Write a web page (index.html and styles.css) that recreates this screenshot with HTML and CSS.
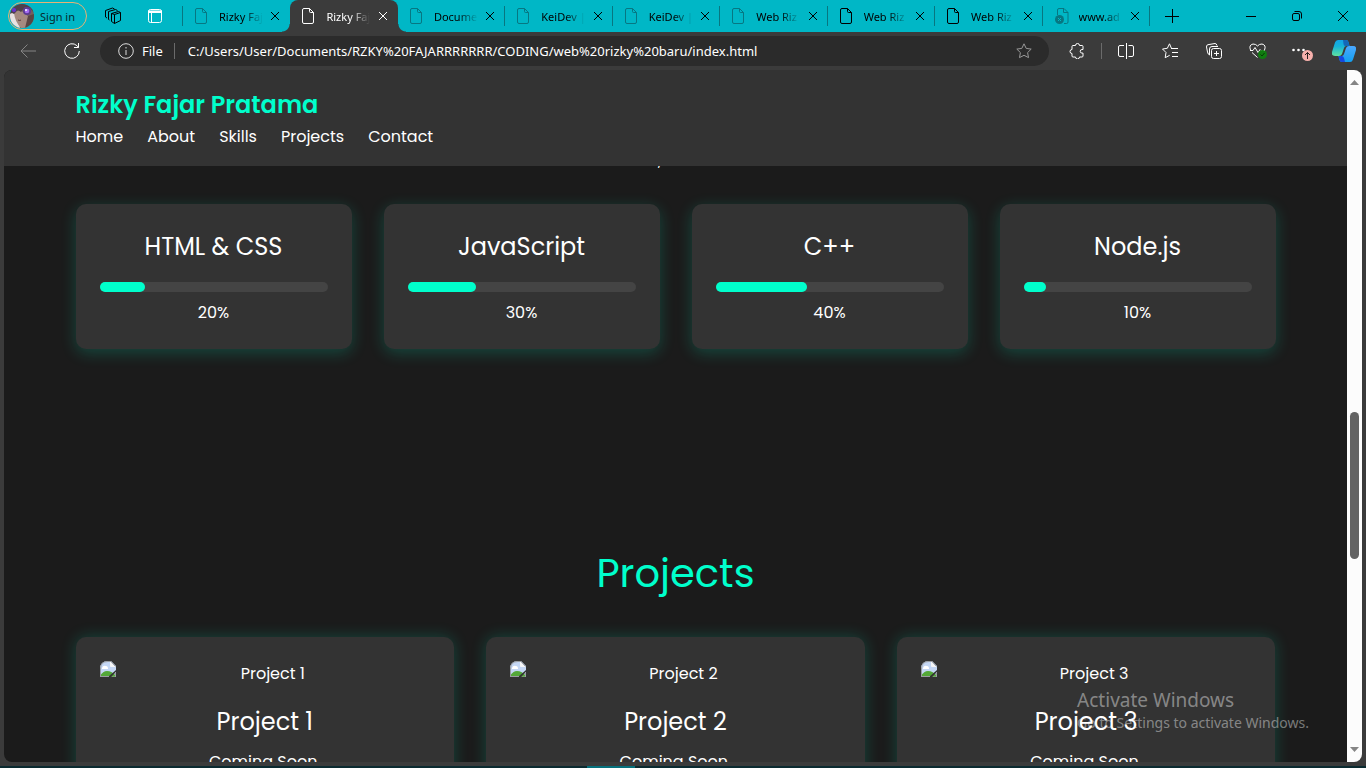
FILE: index.html
```html
<!DOCTYPE html>
<html lang="en">
<head>
<meta charset="utf-8">
<title>Rizky Fajar Pratama</title>
<link rel="stylesheet" href="styles.css">
</head>
<body>
<svg class="defs" width="0" height="0" aria-hidden="true">
  <symbol id="file" viewBox="0 0 12 16"><path d="M7.500.5H2A1.500 1.500 0 0 0 .5 2v12A1.500 1.500 0 0 0 2 15.500h8a1.500 1.500 0 0 0 1.500-1.500V4.500zM7.500.5v3a1 1 0 0 0 1 1h3"/></symbol>
  <symbol id="x" viewBox="0 0 10 10"><path d="M1 1l8 8M9 1L1 9"/></symbol>
  <symbol id="broken" viewBox="0 0 16 16">
    <path d="M0 16V8Q0 0 8 0h3l5 5v11z" fill="#c4d7f5"/>
    <path d="M10 0l6 6h-5q-1 0-1-1z" fill="#f5f6f8"/>
    <path d="M2 7q1-3 4-2 2 0 2 3H2z" fill="#fff"/>
    <path d="M0 15q3-5 7-5 5 0 9 5v1H0z" fill="#54a838"/>
    <path d="M8 16l8-7v2l-5 5z" fill="#333"/>
    <path d="M.5 16V8Q.5.500 8 .500h3l4.500 5M0 15.500h9M15.500 11v5H12" fill="none" stroke="#9a9da1"/>
  </symbol>
</svg>

<header class="tabstrip">
  <div class="tabstrip-start">
    <button class="profile">
      <svg class="avatar" viewBox="0 0 24 24" aria-hidden="true">
        <defs><clipPath id="round"><circle cx="12" cy="12" r="12"/></clipPath></defs>
        <g clip-path="url(#round)">
          <rect width="24" height="24" fill="#75605d"/>
          <path d="M0 9l7-2 3 17H0z" fill="#e8e2e2"/>
          <path d="M4 9q4-4 9-1l7 6-3 10h-6q-6-6-7-15z" fill="#a58a80"/>
          <path d="M0 0h24v9l-4-5-5-1-4 5-3-2-4 4-2-1-2 1z" fill="#4f414b"/>
          <path d="M18 12l6-2v14h-9z" fill="#5a4644"/>
          <path d="M8 16q2 1 3 0" stroke="#5a3c3a" fill="none"/>
          <circle cx="17" cy="7" r="4" fill="#5c3a93"/><circle cx="17" cy="7" r="2.300" fill="#a56cf0"/><circle cx="16" cy="6" r="1" fill="#fff"/>
          <circle cx="4" cy="6" r="2" fill="#6931d4"/>
        </g>
      </svg>
      Sign in
    </button>
    <button class="strip-btn" aria-label="Workspaces">
      <svg class="line" width="18" height="18" viewBox="0 0 18 18"><path d="M7.500 6.500l7-2 2 1v8l-6 3-3-2zM10.500 7.500l6-2M10.500 7.500v9M7.500 6.500l3 1M5.500 13l-1-.5v-8l7-2 2 1M3 11l-1.500-1V3.500l7-2.500 2 1"/></svg>
    </button>
    <button class="strip-btn" aria-label="Tab actions">
      <svg width="16" height="16" viewBox="0 0 16 16"><rect x="1.500" y="1.500" width="13" height="13" rx="2" fill="none" stroke="#fff"/><path d="M1 2.500h14V5H1zM4 5h1v9H4z" fill="#fff"/></svg>
    </button>
  </div>
  <nav class="tabs" aria-label="Tabs">
    <div class="tab dim"><svg class="file"><use href="#file"/></svg><span class="tab-title">Rizky Faj</span><button class="close" aria-label="Close tab"><svg><use href="#x"/></svg></button></div>
    <div class="tab active"><svg class="file"><use href="#file"/></svg><span class="tab-title">Rizky Faj</span><button class="close" aria-label="Close tab"><svg><use href="#x"/></svg></button></div>
    <div class="tab dim"><svg class="file"><use href="#file"/></svg><span class="tab-title">Docume</span><button class="close" aria-label="Close tab"><svg><use href="#x"/></svg></button></div>
    <div class="tab dim"><svg class="file"><use href="#file"/></svg><span class="tab-title">KeiDev |</span><button class="close" aria-label="Close tab"><svg><use href="#x"/></svg></button></div>
    <div class="tab dim"><svg class="file"><use href="#file"/></svg><span class="tab-title">KeiDev |</span><button class="close" aria-label="Close tab"><svg><use href="#x"/></svg></button></div>
    <div class="tab dim"><svg class="file"><use href="#file"/></svg><span class="tab-title">Web Riz</span><button class="close" aria-label="Close tab"><svg><use href="#x"/></svg></button></div>
    <div class="tab"><svg class="file"><use href="#file"/></svg><span class="tab-title">Web Riz</span><button class="close" aria-label="Close tab"><svg><use href="#x"/></svg></button></div>
    <div class="tab"><svg class="file"><use href="#file"/></svg><span class="tab-title">Web Riz</span><button class="close" aria-label="Close tab"><svg><use href="#x"/></svg></button></div>
    <div class="tab dim"><svg class="file file-error" viewBox="0 0 14 16"><path d="M2.500 7V2q0-1.500 1.500-1.500h5l4 4V14q0 1.500-1.500 1.500H9M8.500.5v4h4.500"/><circle cx="4.500" cy="11.500" r="4.500" fill="#077782" stroke="none"/><path d="M3 10l3 3M6 10l-3 3" class="err-x"/></svg><span class="tab-title">www.ad</span><button class="close" aria-label="Close tab"><svg><use href="#x"/></svg></button></div>
  </nav>
  <div class="tabstrip-end">
    <button class="new-tab" aria-label="New tab"><svg class="line" width="14" height="14" viewBox="0 0 14 14"><path d="M7.500 0v14M0 7.500h14"/></svg></button>
    <div class="window-controls">
      <button aria-label="Minimize"><svg class="line" width="10" height="10" viewBox="0 0 10 10"><path d="M0 5.500h10"/></svg></button>
      <button aria-label="Restore"><svg class="line" width="10" height="10" viewBox="0 0 10 10"><rect x=".5" y="2.500" width="7" height="7" rx="1.500"/><path d="M2.500.5H7q2.500 0 2.500 2.500v4.500"/></svg></button>
      <button aria-label="Close"><svg class="line" width="10" height="10" viewBox="0 0 10 10"><path d="M0 0l10 10M10 0L0 10"/></svg></button>
    </div>
  </div>
</header>

<div class="toolbar">
  <div class="nav-buttons">
    <button class="faded" aria-label="Back"><svg class="line" width="16" height="14" viewBox="0 0 16 14"><path d="M16 7H1M7.500.5L1 7l6.500 6.500"/></svg></button>
    <button aria-label="Refresh"><svg class="line" width="16" height="16" viewBox="0 0 16 16"><path d="M15.300 8A7.300 7.300 0 1 1 13 2.700l1.500 1.800M14.500 0v4.500H10"/></svg></button>
  </div>
  <div class="address">
    <svg class="line info" width="16" height="16" viewBox="0 0 16 16"><circle cx="8" cy="8" r="7.300"/><path d="M8 7v5M8 4v1.500"/></svg>
    <label for="url">File</label>
    <span class="divider"></span>
    <input id="url" type="text" value="C:/Users/User/Documents/RZKY%20FAJARRRRRRR/CODING/web%20rizky%20baru/index.html" spellcheck="false">
    <button class="fav" aria-label="Favorite"><svg class="line" width="16" height="16" viewBox="0 0 16 16"><path d="M8 .8l2.200 4.600 5 .7-3.600 3.500.9 5L8 12.300l-4.500 2.300.9-5L.8 6.100l5-.7z"/></svg></button>
  </div>
  <div class="tools">
    <button aria-label="Extensions"><svg class="line" width="16" height="16" viewBox="0 0 16 16"><path d="M4 2.500h2.500a2 2 0 0 1 4 0H13q1 0 1 1V6.500h-1a1.800 1.800 0 0 0 0 3.600h1V13q0 1-1 1h-2.500a2 2 0 0 1-4 0H4q-1 0-1-1v-2.500a2 2 0 0 1 0-4V3.500q0-1 1-1z"/></svg></button>
    <span class="divider"></span>
    <button aria-label="Split screen"><svg class="line" width="16" height="16" viewBox="0 0 16 16"><path d="M6 2.500H2q-1.500 0-1.500 1.500v8q0 1.500 1.500 1.500h4M8.500 0v16M10.500 2.500H14q1.500 0 1.500 1.500v8q0 1.500-1.500 1.500h-3.500"/></svg></button>
    <button aria-label="Favorites"><svg class="line" width="16" height="16" viewBox="0 0 16 16"><path d="M9.500 5.500L7.500.8 5.300 5.300.5 6l3.500 3.500-.8 5.200 4.500-2.400M9 5.500h7M10 9.500h6M10 13.500h6"/></svg></button>
    <button aria-label="Collections"><svg class="line" width="16" height="16" viewBox="0 0 16 16"><rect x="5.500" y="5.500" width="10" height="10" rx="2"/><path d="M10.500 8v5M8 10.500h5M3.500 12Q2 11.500 1.500 9L.5 4Q.3 2 2 1.700L9 .5q1.500 0 2 2M3.500 12V6q0-2.500 2.500-2.500h6"/></svg></button>
    <button aria-label="Browser essentials"><svg class="line" width="18" height="16" viewBox="0 0 18 16"><path d="M1.500 7Q-.5 2 4 1q3 0 4.500 2Q10 1 13 1q4.500 1 2.500 6M1 7.500h3l2-3 3 5 2-3 1 1h4M3 9.500l5.500 5"/><circle cx="13.500" cy="11.500" r="4.500" fill="#107c10" stroke="none"/><path d="M11.500 11.500l1.500 1.500 2.500-3" stroke="#073b07"/></svg></button>
    <button aria-label="Settings and more"><svg width="22" height="22" viewBox="0 0 22 22"><circle cx="2.500" cy="10" r="1.300" fill="#fff"/><circle cx="7.500" cy="10" r="1.300" fill="#fff"/><circle cx="12.500" cy="10" r="1.300" fill="#fff"/><circle cx="16.500" cy="15.500" r="5.500" fill="#f7b0ac"/><path d="M16.500 19v-6.500M14 15l2.500-2.500L19 15" fill="none" stroke="#2a2020"/></svg></button>
    <button class="copilot" aria-label="Copilot"><svg width="24" height="22" viewBox="0 0 24 22">
      <defs>
        <linearGradient id="ca" x1="0" y1="0" x2="0" y2="1"><stop offset="0" stop-color="#12a4e8"/><stop offset=".4" stop-color="#16b3d8"/><stop offset="1" stop-color="#5fe0a0"/></linearGradient>
        <linearGradient id="cb" x1="0" y1="0" x2="0" y2="1"><stop offset="0" stop-color="#4aa8ff"/><stop offset="1" stop-color="#12a0f0"/></linearGradient>
      </defs>
      <path d="M6 0h8q2 0 2.500 2l1 4h-3q-2 0-2.500 2l-2 6q-.8 2-3 2H3q-4 0-3-4L3 2.500Q3.800 0 6 0z" fill="url(#ca)"/>
      <path d="M11 0h3q2 0 2.500 2l1 4h-4q-2 0-2-2z" fill="#1467b8"/>
      <path d="M18 22h-8q-2 0-2.500-2l-1-4h3q2 0 2.500-2l2-6q.8-2 3-2h4q4 0 3 4l-3 9.500q-.8 2.500-3 2.500z" fill="url(#cb)"/>
      <path d="M13 22h-3q-2 0-2.500-2l-1-4h3q2 0 2.500 2z" fill="#1746e0"/>
    </svg></button>
  </div>
</div>

<div class="viewport">
  <div class="page">
    <header class="site-header">
      <div class="container">
        <div class="logo">Rizky Fajar Pratama</div>
        <nav class="menu">
          <a href="#home">Home</a><a href="#about">About</a><a href="#skills">Skills</a><a href="#projects">Projects</a><a href="#contact">Contact</a>
        </nav>
      </div>
    </header>
    <main class="container">
      <section id="skills" class="skills">
        <p class="lead">,</p>
        <div class="skill-grid">
          <article class="card"><h3>HTML &amp; CSS</h3><div class="bar"><div class="fill" style="width:20%"></div></div><p>20%</p></article>
          <article class="card"><h3>JavaScript</h3><div class="bar"><div class="fill" style="width:30%"></div></div><p>30%</p></article>
          <article class="card"><h3>C++</h3><div class="bar"><div class="fill" style="width:40%"></div></div><p>40%</p></article>
          <article class="card"><h3>Node.js</h3><div class="bar"><div class="fill" style="width:10%"></div></div><p>10%</p></article>
        </div>
      </section>
      <section id="projects" class="projects">
        <h2>Projects</h2>
        <div class="project-grid">
          <article class="card"><div class="thumb"><svg><use href="#broken"/></svg><span>Project 1</span></div><h3>Project 1</h3><p>Coming Soon.</p></article>
          <article class="card"><div class="thumb"><svg><use href="#broken"/></svg><span>Project 2</span></div><h3>Project 2</h3><p>Coming Soon.</p></article>
          <article class="card"><div class="thumb"><svg><use href="#broken"/></svg><span>Project 3</span></div><h3>Project 3</h3><p>Coming Soon.</p></article>
        </div>
      </section>
    </main>
  </div>
  <div class="scrollbar" aria-hidden="true">
    <svg width="9" height="5" viewBox="0 0 9 5"><path d="M0 5L4.500 0 9 5z" fill="#858585"/></svg>
    <div class="track"><div class="scroll-thumb"></div></div>
    <svg width="9" height="5" viewBox="0 0 9 5"><path d="M0 0l4.500 5L9 0z" fill="#858585"/></svg>
  </div>
</div>
<footer class="taskbar-edge"><span></span></footer>

<aside class="watermark"><strong>Activate Windows</strong><span>Go to Settings to activate Windows.</span></aside>
</body>
</html>
```
FILE: styles.css
```css
* { box-sizing: border-box; }

body {
  margin: 0;
  height: 100vh;
  display: flex;
  flex-direction: column;
  overflow: hidden;
  background: #3b3b3b;
  color: #fff;
  font-family: "Segoe UI", "Noto Sans", sans-serif;
  font-size: 11px;
}

button {
  display: flex;
  align-items: center;
  justify-content: center;
  padding: 0;
  border: 0;
  background: none;
  color: inherit;
  font: inherit;
}

h2, h3, p { margin: 0; font-weight: 400; }

.defs { position: absolute; }
.line { fill: none; stroke: currentColor; }

/* Tab strip */
.tabstrip {
  display: flex;
  flex: none;
  height: 32px;
  background: #00b7c6;
  color: #06282c;
}

.tabstrip-start {
  display: flex;
  align-items: center;
  flex: none;
  width: 183px;
  padding-left: 8px;
  background: linear-gradient(#087680, #087680) right center / 1px 20px no-repeat;
}

.profile {
  gap: 6px;
  width: 79px;
  height: 28px;
  margin-right: 5px;
  border: 1px solid #e8b274;
  border-radius: 14px;
  justify-content: flex-start;
  white-space: nowrap;
}

.avatar { width: 24px; height: 24px; margin-left: 1px; flex: none; }
.strip-btn { width: 42px; height: 32px; color: #000; }

.tabs { display: flex; flex: 1; min-width: 0; }

.tab {
  display: flex;
  align-items: center;
  flex: 1;
  min-width: 0;
  padding: 0 10px 0 12px;
  background: linear-gradient(#087680, #087680) right center / 1px 20px no-repeat;
  color: #000;
}

.tab:first-child, .tab.active { background-image: none; }

.tab.active {
  position: relative;
  flex-basis: 2px;
  background-color: #3b3b3b;
  border-radius: 8px 8px 0 0;
  color: #fff;
}

.tab.active::before, .tab.active::after {
  content: "";
  position: absolute;
  bottom: 0;
  width: 8px;
  height: 8px;
}

.tab.active::before { right: 100%; background: radial-gradient(circle at 0 0, transparent 7px, #3b3b3b 8px); }
.tab.active::after { left: 100%; background: radial-gradient(circle at 100% 0, transparent 7px, #3b3b3b 8px); }

.file { width: 12px; height: 16px; margin-right: 12px; flex: none; fill: none; stroke: currentColor; }
.file-error { width: 14px; margin-right: 10px; }
.err-x { stroke: #00b7c6; }
.tab.dim .file { color: #077782; }

.tab-title {
  flex: 1;
  min-width: 0;
  margin-right: 6px;
  overflow: hidden;
  white-space: nowrap;
  -webkit-mask-image: linear-gradient(to right, #000 24px, transparent 44px);
  mask-image: linear-gradient(to right, #000 24px, transparent 44px);
}

.close svg { width: 10px; height: 10px; stroke: currentColor; }

.tabstrip-end { display: flex; justify-content: space-between; flex: none; width: 216px; color: #000; }
.new-tab { width: 44px; }
.window-controls { display: flex; }
.window-controls button { width: 46px; }

/* Toolbar */
.toolbar { display: flex; align-items: center; flex: none; height: 38px; }
.nav-buttons { display: flex; padding: 0 6px; }
.nav-buttons button { width: 44px; height: 30px; }
.faded { color: #858585; }

.address {
  display: flex;
  align-items: center;
  flex: 1;
  min-width: 0;
  height: 30px;
  padding: 0 17px 0 18px;
  border-radius: 15px;
  background: #2b2b2b;
}

.info { flex: none; margin-right: 8px; color: #ddd; }
.address label { font-size: 13px; }
.divider { width: 1px; height: 16px; background: #6b6b6b; }
.address .divider { margin: 0 13px 0 11px; }

.address input {
  flex: 1;
  min-width: 0;
  padding: 0;
  border: 0;
  outline: 0;
  background: none;
  color: #fff;
  font: inherit;
  font-size: 13px;
}

.fav { color: #999; }
.tools { display: flex; align-items: center; flex: none; padding-left: 6px; }
.tools button { width: 44px; height: 30px; }
.tools .divider { margin: 0 2px; }
.tools .copilot { width: 42px; padding-right: 2px; }

/* Page */
.viewport {
  display: flex;
  flex: 1;
  min-height: 0;
  margin: 0 4px 4px;
  border-radius: 8px;
  overflow: hidden;
}

.page {
  position: relative;
  flex: 1;
  min-width: 0;
  overflow: hidden;
  background: #1b1b1b;
  font-family: Poppins, Inter, sans-serif;
  font-size: 16px;
  line-height: 26px;
}

.container { max-width: 1200px; margin: 0 auto; }

.site-header {
  position: absolute;
  z-index: 1;
  top: 0;
  left: 0;
  right: 0;
  padding: 16px 0;
  background: #333;
}

.logo { color: #00ffcc; font-size: 24px; font-weight: 600; line-height: 38px; }
.menu { display: flex; gap: 24px; }
.menu a { color: #fff; text-decoration: none; }

.skills { padding-top: 78px; text-align: center; }
.lead { padding-right: 32px; margin-bottom: 30px; }
.skill-grid { display: grid; grid-template-columns: repeat(4, 1fr); gap: 32px; }

.card {
  padding: 24px;
  border-radius: 10px;
  background: #333;
  box-shadow: 0 4px 16px rgba(0, 255, 204, 0.2);
  text-align: center;
}

.card h3 { font-size: 24px; line-height: 38px; }
.bar { height: 10px; margin: 16px 0 8px; border-radius: 5px; background: #444; }
.fill { height: 100%; border-radius: 5px; background: #00ffcc; }
.skills .card p { line-height: 25px; }

.projects { padding-top: 192px; }
.projects h2 { margin-bottom: 32px; color: #00ffcc; font-size: 40px; line-height: 64px; text-align: center; }
.project-grid { display: grid; grid-template-columns: repeat(3, 1fr); gap: 32px; }
.projects .card { box-shadow: 0 0 16px rgba(0, 255, 204, 0.2); }
.thumb { display: flex; margin-bottom: 16px; }
.thumb svg { width: 16px; height: 16px; flex: none; }
.thumb span { flex: 1; }
.projects h3 { margin-bottom: 8px; }

/* Scrollbar */
.scrollbar {
  display: flex;
  flex-direction: column;
  align-items: center;
  flex: none;
  width: 15px;
  padding: 10px 0;
  background: #fcfcfc;
}

.track { display: flex; flex-direction: column; flex: 1; width: 9px; }
.track::before { content: ""; flex: 327; }
.track::after { content: ""; flex: 188; }
.scroll-thumb { flex: 147; border-radius: 5px; background: #636363; }

.taskbar-edge { flex: none; height: 2px; background: #0b2a30; }
.taskbar-edge span { display: block; width: 48px; height: 2px; margin-left: 43%; background: #06707c; }

.watermark {
  position: absolute;
  right: 57px;
  bottom: 35px;
  display: flex;
  flex-direction: column;
  color: rgba(255, 255, 255, 0.42);
  font-size: 14px;
  line-height: 20px;
  pointer-events: none;
}

.watermark strong { font-size: 19px; font-weight: 400; line-height: 26px; }
```
